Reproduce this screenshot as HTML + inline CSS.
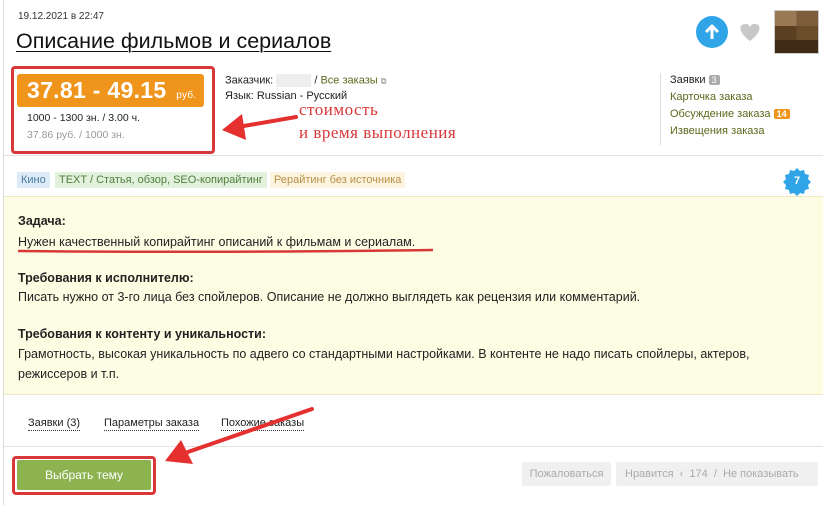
<!DOCTYPE html>
<html><head><meta charset="utf-8"><style>
*{margin:0;padding:0;box-sizing:border-box}
body{width:823px;height:505px;overflow:hidden;background:#fff;font-family:"Liberation Sans","DejaVu Sans",sans-serif;color:#222;position:relative}
.a{position:absolute;white-space:nowrap}
.lk{color:#5a6a1e}
.tag{position:absolute;top:172px;height:16px;font-size:11px;line-height:16px;padding:0 4px}
.tab{font-size:11px;border-bottom:1px dotted #333;line-height:13px}
.gb{position:absolute;top:462px;height:24px;background:#f0f0f0;color:#aaa;font-size:11px;line-height:24px;border-radius:2px}
</style></head><body>
<div class="a" style="left:3px;top:0;width:1px;height:505px;background:#ddd"></div>
<div class="a" style="left:18px;top:11px;font-size:10px;color:#333">19.12.2021 в 22:47</div>
<div class="a" style="left:16px;top:29px;font-size:21.5px;color:#111;text-decoration:underline;text-decoration-thickness:1px;text-underline-offset:3px">Описание фильмов и сериалов</div>

<div class="a" style="left:11px;top:66px;width:204px;height:88px;border:3px solid #d9383a;border-radius:4px"></div>
<div class="a" style="left:17px;top:74px;width:187px;height:33px;background:#f0951b;border-radius:3px;color:#fff;font-size:23px;line-height:33px;padding-left:10px;font-weight:bold;letter-spacing:0.3px">37.81 - 49.15 <span style="font-size:10px;font-weight:normal">&nbsp;руб.</span></div>
<div class="a" style="left:27px;top:112px;font-size:10.5px;color:#222">1000 - 1300 зн. / 3.00 ч.</div>
<div class="a" style="left:27px;top:129px;font-size:10.5px;color:#999">37.86 руб. / 1000 зн.</div>

<div class="a" style="left:225px;top:74px;font-size:11px">Заказчик: <span style="display:inline-block;width:35px;height:13px;background:#eee;vertical-align:middle"></span> / <span class="lk">Все заказы</span> <span style="font-size:8px;color:#777">⧉</span></div>
<div class="a" style="left:225px;top:90px;font-size:11px">Язык: Russian - Русский</div>

<div class="a" style="left:299px;top:100px;font-family:'Liberation Serif',serif;font-size:17px;color:#d9383a;letter-spacing:0.5px">стоимость</div>
<div class="a" style="left:299px;top:123px;font-family:'Liberation Serif',serif;font-size:17px;color:#d9383a;letter-spacing:0.5px">и время выполнения</div>

<div class="a" style="left:774px;top:10px;width:45px;height:44px;border:1px solid #ccc;background:linear-gradient(90deg,#9a7a55 0 50%,#7e5e3a 50%);"></div>
<div class="a" style="left:775px;top:26px;width:43px;height:27px;background:linear-gradient(90deg,#5a4020 0 50%,#6a4e2c 50%)"></div>
<div class="a" style="left:775px;top:40px;width:43px;height:13px;background:#3e2a15"></div>

<div class="a" style="left:660px;top:73px;width:1px;height:72px;background:#ddd"></div>
<div class="a" style="left:670px;top:74px;font-size:11px">Заявки <span style="background:#aaa;color:#fff;font-size:9px;padding:0 3px;border-radius:2px">3</span></div>
<div class="a lk" style="left:670px;top:91px;font-size:11px">Карточка заказа</div>
<div class="a lk" style="left:670px;top:108px;font-size:11px">Обсуждение заказа <span style="background:#f0951b;color:#fff;font-size:9px;padding:0 3px;border-radius:2px;font-weight:bold">14</span></div>
<div class="a lk" style="left:670px;top:125px;font-size:11px">Извещения заказа</div>

<div class="a" style="left:4px;top:155px;width:819px;height:1px;background:#e3e3e3"></div>
<div class="tag" style="left:17px;background:#dcebf7;color:#4a7aa0">Кино</div>
<div class="tag" style="left:55px;background:#e1f1dc;color:#4f7d3a">TEXT / Статья, обзор, SEO-копирайтинг</div>
<div class="tag" style="left:270px;background:#fcf4de;color:#b8904a">Рерайтинг без источника</div>

<div class="a" style="left:4px;top:196px;width:819px;height:199px;background:#fdfde4;border-top:1px solid #eee8c0;border-bottom:1px solid #eee8c0"></div>
<div class="a" style="left:18px;top:214px;font-size:12.5px;font-weight:bold">Задача:</div>
<div class="a" style="left:18px;top:235px;font-size:12.5px">Нужен качественный копирайтинг описаний к фильмам и сериалам.</div>
<div class="a" style="left:18px;top:271px;font-size:12.5px;font-weight:bold">Требования к исполнителю:</div>
<div class="a" style="left:18px;top:290px;font-size:12.5px">Писать нужно от 3-го лица без спойлеров. Описание не должно выглядеть как рецензия или комментарий.</div>
<div class="a" style="left:18px;top:327px;font-size:12.5px;font-weight:bold">Требования к контенту и уникальности:</div>
<div class="a" style="left:18px;top:347px;font-size:12.5px">Грамотность, высокая уникальность по адвего со стандартными настройками. В контенте не надо писать спойлеры, актеров,</div>
<div class="a" style="left:18px;top:367px;font-size:12.5px">режиссеров и т.п.</div>

<div class="a tab" style="left:28px;top:417px">Заявки (3)</div>
<div class="a tab" style="left:104px;top:417px">Параметры заказа</div>
<div class="a tab" style="left:221px;top:417px">Похожие заказы</div>
<div class="a" style="left:4px;top:446px;width:819px;height:1px;background:#e3e3e3"></div>

<div class="a" style="left:12px;top:456px;width:144px;height:39px;border:3px solid #d9383a;border-radius:4px"></div>
<div class="a" style="left:17px;top:460px;width:134px;height:30px;background:#8cb350;border-radius:2px;color:#fff;font-size:12px;line-height:30px;text-align:center">Выбрать тему</div>
<div class="gb" style="left:522px;width:89px;text-align:center">Пожаловаться</div>
<div class="gb" style="left:616px;width:202px;padding-left:9px">Нравится &nbsp;‹ &nbsp;174 &nbsp;/ &nbsp;Не показывать</div>

<svg class="a" style="left:0;top:0;z-index:5" width="823" height="505">
<path d="M296 117 L238 127" stroke="#e53030" stroke-width="4" stroke-linecap="round"/>
<path d="M222 130 L242 114 L246 140 Z" fill="#e53030"/>
<path d="M18 251 Q200 253 433 250" stroke="#d9383a" stroke-width="2.5" fill="none"/>
<path d="M312 409 L185 453" stroke="#e53030" stroke-width="4" stroke-linecap="round"/>
<path d="M165 461 L181 440 L193 464 Z" fill="#e53030"/>
<circle cx="712" cy="32" r="16" fill="#2fa4e7"/>
<path d="M712 39 V27 M706 32 L712 26 L718 32" stroke="#fff" stroke-width="3" fill="none" stroke-linejoin="round"/>
<path d="M750 41 C738 32 739 25 744 24 C747 23 749 25 750 27 C751 25 753 23 756 24 C761 25 762 32 750 41 Z" fill="#c8c8c8"/>
<path d="M797 168 l3 3 4 -1 1 4 4 1 -1 4 3 3 -3 3 1 4 -4 1 -1 4 -4 -1 -3 3 -3 -3 -4 1 -1 -4 -4 -1 1 -4 -3 -3 3 -3 -1 -4 4 -1 1 -4 4 1 z" fill="#2fa4e7"/>
<text x="797" y="184" font-size="11" font-weight="bold" fill="#fff" text-anchor="middle" font-family="Liberation Sans, sans-serif">7</text>
</svg>
</body></html>
